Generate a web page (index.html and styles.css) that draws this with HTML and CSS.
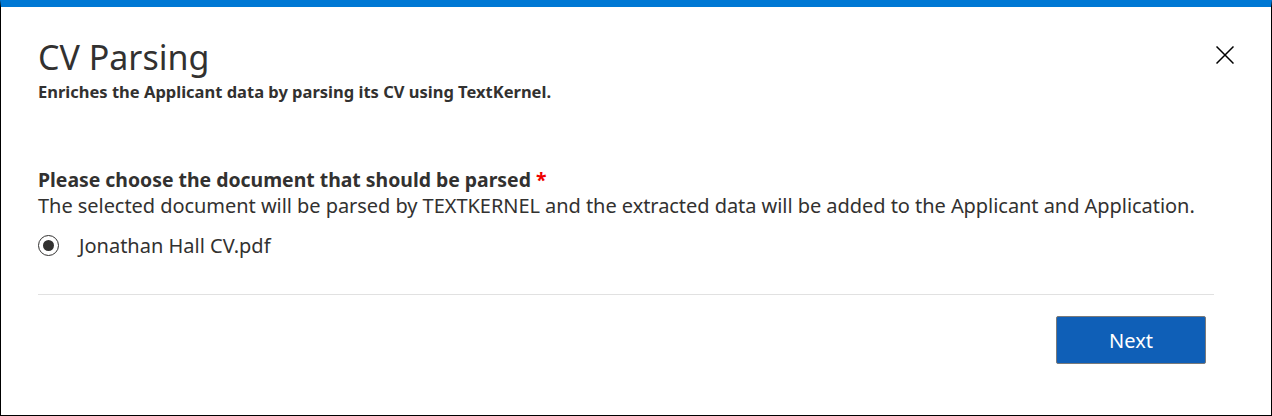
FILE: index.html
```html
<!DOCTYPE html>
<html lang="en">
<head>
  <meta charset="UTF-8">
  <meta name="viewport" content="width=device-width, initial-scale=1.0">
  <link rel="stylesheet" href="styles.css">
</head>
<body>
  <div class="dialog">
    <div class="dialog-head">
      <div class="head-text">
        <h1 class="title">CV Parsing</h1>
        <p class="subtitle">Enriches the Applicant data by parsing its CV using TextKernel.</p>
      </div>
      <button class="close" aria-label="Close">
        <svg width="18" height="18" viewBox="0 0 18 18">
          <path d="M0.5 0.5 L17.5 17.5 M17.5 0.5 L0.5 17.5" stroke="#000" stroke-width="1.5" fill="none"/>
        </svg>
      </button>
    </div>

    <div class="field">
      <div class="label">Please choose the document that should be parsed <span class="req">*</span></div>
      <div class="hint">The selected document will be parsed by TEXTKERNEL and the extracted data will be added to the Applicant and Application.</div>
      <label class="radio">
        <span class="dot"></span>
        <span class="radio-text">Jonathan Hall CV.pdf</span>
      </label>
    </div>

    <div class="footer">
      <button class="btn-next">Next</button>
    </div>
  </div>
</body>
</html>
```

FILE: styles.css
```css
html, body {
  margin: 0;
  padding: 0;
}

body {
  background: #fff;
  font-family: 'Noto Sans', 'Open Sans', sans-serif;
  color: #323130;
}

.dialog {
  box-sizing: border-box;
  width: 1272px;
  height: 416px;
  border: 1px solid #000;
  border-top: 7px solid #0078d4;
  padding: 0 37px;
}

.dialog-head {
  display: flex;
  justify-content: space-between;
  align-items: flex-start;
}

.title {
  margin: 28px 0 0 0;
  font-size: 34px;
  font-weight: 400;
  line-height: 44px;
}

.subtitle {
  margin: 2px 0 0 0;
  font-size: 16.5px;
  font-weight: 700;
  line-height: 22px;
}

.close {
  margin: 39px 0 0 0;
  padding: 0;
  border: none;
  background: none;
  width: 18px;
  height: 18px;
}

.field {
  margin-top: 64px;
}

.label {
  font-size: 19.4px;
  font-weight: 700;
  line-height: 26px;
}

.req {
  color: #e00;
}

.hint {
  font-size: 20px;
  line-height: 26px;
  letter-spacing: -0.05px;
}

.radio {
  display: flex;
  align-items: center;
  margin-top: 13px;
  height: 26px;
}

.dot {
  box-sizing: border-box;
  width: 21px;
  height: 21px;
  border: 1.5px solid #323130;
  border-radius: 50%;
  display: flex;
  align-items: center;
  justify-content: center;
}

.dot::after {
  content: '';
  width: 11px;
  height: 11px;
  border-radius: 50%;
  background: #323130;
}

.radio-text {
  margin-left: 20px;
  font-size: 20px;
}

.footer {
  margin-top: 36px;
  margin-right: 20px;
  border-top: 1px solid #e1e1e1;
  display: flex;
  justify-content: flex-end;
  padding-top: 21px;
}

.btn-next {
  width: 150px;
  height: 48px;
  margin-right: 8px;
  background: #0f5fb7;
  color: #fff;
  border: 1px solid #7a7a7a;
  border-radius: 2px;
  font-family: 'Noto Sans', 'Open Sans', sans-serif;
  font-size: 20px;
}
```
